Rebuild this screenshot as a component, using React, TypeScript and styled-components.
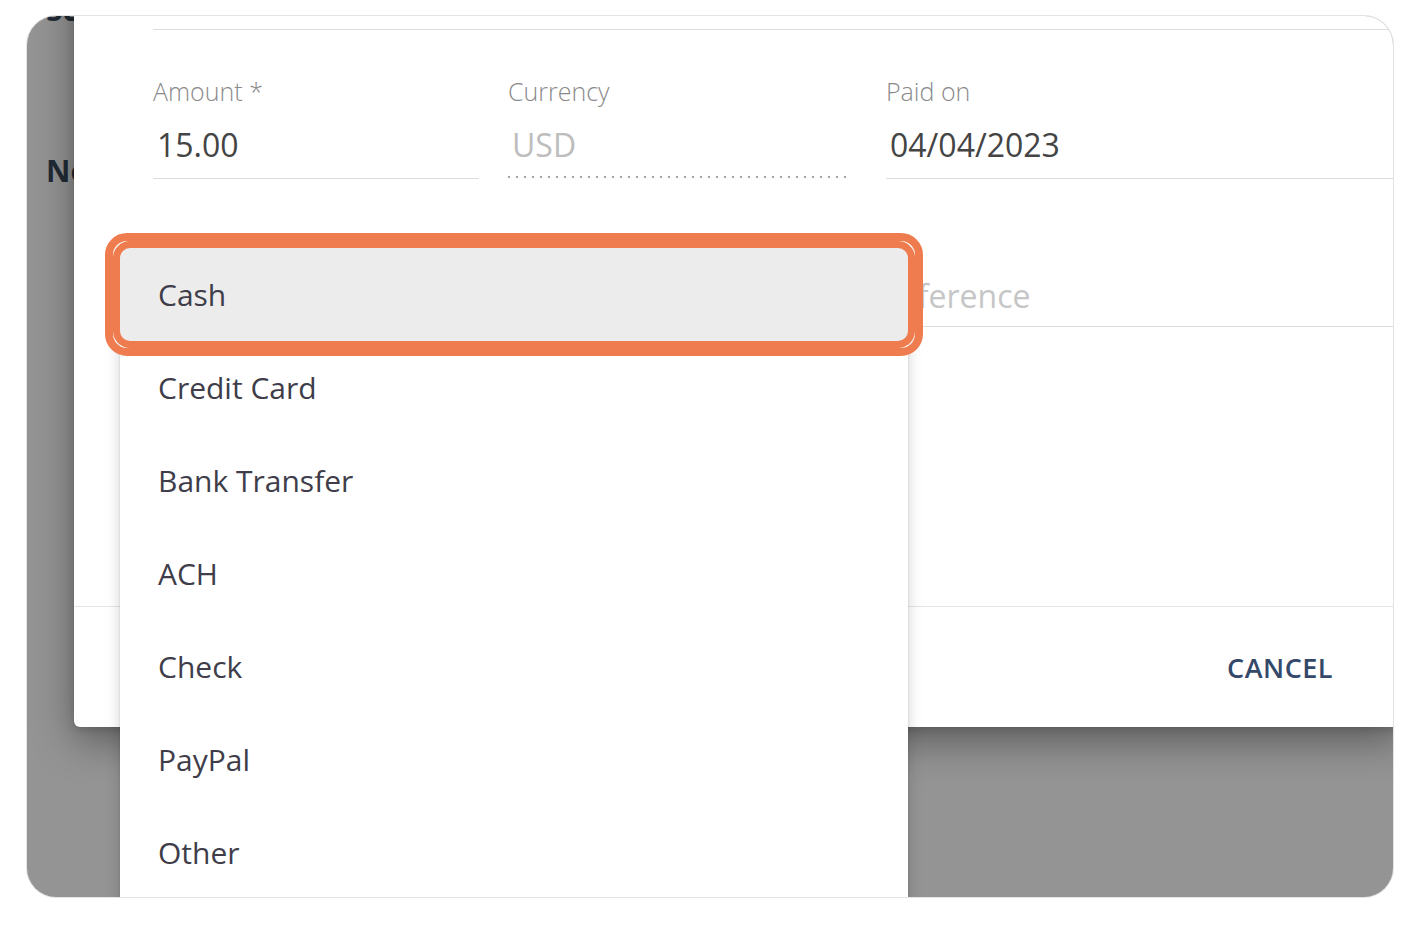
import React from 'react'
import styled, { createGlobalStyle } from 'styled-components'

const GlobalStyle = createGlobalStyle`
  html, body {
    margin: 0;
    padding: 0;
    background: #ffffff;
    font-family: "Open Sans", "Liberation Sans", sans-serif;
  }
  * { box-sizing: border-box; }
`

const methods = ['Cash', 'Credit Card', 'Bank Transfer', 'ACH', 'Check', 'PayPal', 'Other']

export default function App() {
  return (
    <>
      <GlobalStyle />
      <Frame>
        <BackPage>
          <PageTitle>Schedule payment</PageTitle>
          <PageLabel>Notes</PageLabel>
        </BackPage>
        <Backdrop />

        <Modal>
          <ModalBody>
            <PrevField />
            <FieldRow $cols="326px 338px 1fr" $top={45}>
              <Field>
                <Label>Amount *</Label>
                <Value>15.00</Value>
              </Field>
              <Field $dotted>
                <Label>Currency</Label>
                <Value $muted>USD</Value>
              </Field>
              <Field $shift={11}>
                <Label>Paid on</Label>
                <Value>04/04/2023</Value>
              </Field>
            </FieldRow>
            <FieldRow $cols="694px 1fr" $top={95}>
              {/* the open select: its value sits under the menu */}
              <Field $pad={8}>
                <Value>&nbsp;</Value>
              </Field>
              <Field $pad={8}>
                <Value $placeholder>Reference</Value>
              </Field>
            </FieldRow>
          </ModalBody>
          <Footer>
            <TextButton>CANCEL</TextButton>
          </Footer>
        </Modal>

        <Menu>
          {methods.map((m, i) => (
            <MenuItem key={m} $active={i === 0}>
              {m}
            </MenuItem>
          ))}
        </Menu>
      </Frame>
    </>
  )
}

const Frame = styled.div`
  position: relative;
  margin: 15px 0 0 26px;
  width: 1368px;
  height: 883px;
  border: 1px solid #e3e3e3;
  border-radius: 30px;
  overflow: hidden;
  background: #ffffff;
`

const BackPage = styled.div`
  padding-left: 19px;
  color: #3a4a5c;
  font-weight: 700;
  font-size: 30px;
  line-height: 36px;
`

const PageTitle = styled.div`
  margin-top: -24px;
`

const PageLabel = styled.div`
  margin-top: 125px;
`

const Backdrop = styled.div`
  position: absolute;
  inset: 0;
  background: rgba(0, 0, 0, 0.42);
`

const Modal = styled.div`
  position: absolute;
  left: 47px;
  top: -56px;
  width: 1330px;
  background: #ffffff;
  border-radius: 6px;
  box-shadow: 0 14px 40px rgba(0, 0, 0, 0.38), 0 2px 8px rgba(0, 0, 0, 0.15);
  display: flex;
  flex-direction: column;
`

const ModalBody = styled.div`
  padding: 0 0 279px 79px;
  height: 646px;
`

const PrevField = styled.div`
  height: 70px;
  border-bottom: 1px solid #dedede;
`

const FieldRow = styled.div<{ $cols: string; $top: number }>`
  display: grid;
  grid-template-columns: ${(p) => p.$cols};
  column-gap: 29px;
  margin-top: ${(p) => p.$top}px;
`

const Field = styled.div<{ $dotted?: boolean; $shift?: number; $pad?: number }>`
  display: flex;
  flex-direction: column;
  margin-left: ${(p) => p.$shift ?? 0}px;
  padding-bottom: ${(p) => p.$pad ?? 11}px;
  ${(p) =>
    p.$dotted
      ? `
    background-image: linear-gradient(to right, #a6a6a6 2px, transparent 2px);
    background-size: 8px 2px;
    background-repeat: repeat-x;
    background-position: 0 100%;
    border-bottom: 1px solid transparent;
  `
      : `border-bottom: 1px solid #dcdcdc;`}
`

const Label = styled.div`
  font-size: 25px;
  font-weight: 300;
  line-height: 32px;
  color: #8a8a8a;
  margin-bottom: 16px;
`

const Value = styled.div<{ $muted?: boolean; $placeholder?: boolean }>`
  font-size: 32px;
  line-height: 44px;
  padding-left: 4px;
  color: ${(p) => (p.$placeholder ? '#c6c6c6' : p.$muted ? '#bdbdbd' : '#444444')};
`

const Footer = styled.div`
  height: 121px;
  border-top: 1px solid #e4e4e4;
  display: flex;
  align-items: center;
  justify-content: flex-end;
  padding-right: 71px;
`

const TextButton = styled.button`
  border: none;
  background: none;
  font-family: "Open Sans", "Liberation Sans", sans-serif;
  font-size: 27px;
  font-weight: 600;
  letter-spacing: 0.5px;
  color: #34496a;
  padding: 0;
  cursor: pointer;
`

const Menu = styled.div`
  position: absolute;
  left: 93px;
  top: 232px;
  width: 788px;
  background: #ffffff;
  box-shadow: 0 4px 14px rgba(0, 0, 0, 0.18), 0 0 2px rgba(0, 0, 0, 0.12);
  display: flex;
  flex-direction: column;
`

const MenuItem = styled.div<{ $active?: boolean }>`
  position: relative;
  height: 93px;
  display: flex;
  align-items: center;
  padding-left: 38px;
  font-size: 30px;
  color: #3e3d49;
  background: ${(p) => (p.$active ? '#ececec' : 'transparent')};
  border-radius: ${(p) => (p.$active ? '10px' : '0')};
  ${(p) =>
    p.$active &&
    `
    box-shadow: 0 0 0 7px #ee7c4e;
    &::before {
      content: '';
      position: absolute;
      inset: -15px;
      border: 8px solid #ee7c4e;
      border-radius: 22px;
      pointer-events: none;
    }
  `}
`
